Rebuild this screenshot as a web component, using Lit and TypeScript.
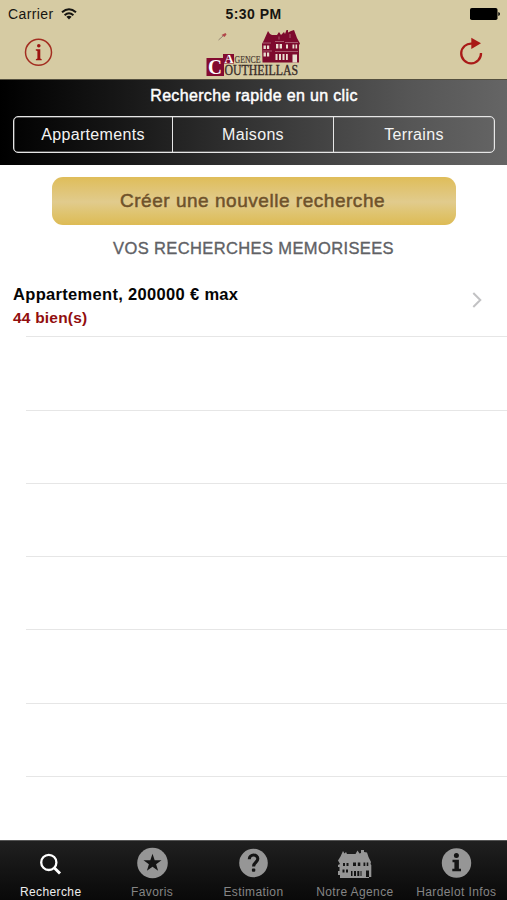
import { LitElement, html, css, svg } from "lit";
import { customElement } from "lit/decorators.js";
import { classMap } from "lit/directives/class-map.js";

const tabHouse = svg`
  <path fill="#969696" fill-rule="evenodd" d="M0 12.5 L2.5 8.5 L5 3 L6.5 5.5 L8 4 L9 6 H17.5 L19.5 2.5 L21.5 5.5 L23 5 V2 H26 V4 L29 4.5 L30.5 9 L33 14 L32.5 16 L33.3 17 V29 H31 V30 H2 V27 H0 V23 H1.5 V19 H0 V17 L2 16Z
  M5 15h2v3h-2z M8.5 15h2v3h-2z M15 14.5h3v3.5h-3z M19.8 14.5h2.5v3.5h-2.5z M25.5 14.5h1.8v3.5h-1.8z M28.7 14.5h1.6v3.5h-1.6z
  M4.5 21.5h2v3h-2z M8 21.5h2v3h-2z M13 23h1.5v5h-1.5z M16 23h2v5h-2z M19.3 23h2v5h-2z M22.5 23h1v5h-1z M28 22.5h3v6.5h-3z"/>`;

const logoHouse = svg`
  <path fill="#7d0a2d" d="M56 16 L58 12 L60 7.5 L62 3 L64 6 L66 7 H71 L73 4 L75 7 L76 6 L78 4 L79 6 L80.5 2 H82 V4.5 L85 3 L88 2 L89.5 6 L91 10 L94 15.5 L93 17 V34.5 H56.5Z"/>
  <path fill="#e9ddd0" d="M57.5 17.5h2.4v3.5h-2.4z M61 17.5h2.2v3.5h-2.2z M70 16h2.4v4.5h-2.4z M73.6 16h2.4v4.5h-2.4z M80 16.5h2v4h-2z M86.5 16.5h1.8v4h-1.8z M89.5 16.5h1.6v4h-1.6z
    M57.5 24.5h2.4v4h-2.4z M61 24.5h2.2v4h-2.2z M69.5 26h2v6h-2z M73 26h2v6h-2z M76.5 26h2v6h-2z M80 26h1.8v6h-1.8z M86.5 26.5h4.5v8h-4.5z"/>
  <path fill="none" stroke="#c9929a" stroke-width=".6" d="M57 15H65M69 13.5H78M79 14.5H92M57 23H66M69 23.5H92M73 8.5V11.5M84 6V10"/>`;

const icons = {
  search: svg`<circle cx="14.8" cy="14.4" r="7.6" fill="none" stroke="#fff" stroke-width="2.3"/><path d="M20.2 19.8L26 25.5" stroke="#fff" stroke-width="3"/>`,
  star: svg`<circle cx="16.5" cy="15" r="15.3" fill="#969696"/><path d="M16.5 5.7L18.7 12.2H25.5L20.1 16.2L22.1 22.7L16.5 18.8L10.9 22.7L12.9 16.2L7.5 12.2H14.3Z" fill="#151515"/>`,
  help: svg`<circle cx="16.5" cy="15" r="14.3" fill="#969696"/><path d="M12.3 11.2C12.3 5.7 20.8 5.8 20.8 10.8C20.8 14.4 16.6 14.2 16.6 18.6" fill="none" stroke="#151515" stroke-width="3.1"/><rect x="14.9" y="20.4" width="3.4" height="3.4" rx="1" fill="#151515"/>`,
  house: tabHouse,
  info: svg`<circle cx="16.5" cy="15" r="14.7" fill="#969696"/><circle cx="16.4" cy="7.6" r="2.5" fill="#151515"/><path d="M12.5 11.7H18.9V20.7H21V23.3H12.3V20.7H14.4V14.2H12.5Z" fill="#151515"/>`,
};

const tabs = [
  { label: "Recherche", icon: icons.search },
  { label: "Favoris", icon: icons.star },
  { label: "Estimation", icon: icons.help },
  { label: "Notre Agence", icon: icons.house },
  { label: "Hardelot Infos", icon: icons.info },
];

@customElement("app-root")
export class AppRoot extends LitElement {
  static styles = css`
    :host { display: flex; flex-direction: column; width: 507px; height: 900px; overflow: hidden;
      background: #fff; font-family: "Liberation Sans", Arial, sans-serif; }
    * { box-sizing: border-box; }
    svg { display: block; overflow: visible; }
    .header { height: 79px; flex: none; background: #d6cba3; }
    .status { height: 28px; display: grid; grid-template-columns: 1fr auto 1fr; align-items: center; color: #161511; }
    .carrier { display: flex; align-items: center; gap: 7px; padding-left: 8px; font-size: 14px; letter-spacing: .4px; }
    .time { font-size: 14px; font-weight: bold; letter-spacing: .45px; }
    .battery { justify-self: end; margin-right: 7px; }
    .nav { height: 51px; display: flex; justify-content: space-between; }
    .info { margin: 10px 0 0 24px; }
    .reload { margin: 8px 22px 0 0; }
    .quick { height: 86px; flex: none; padding: 6px 12px 0 13px; color: #fff;
      background: linear-gradient(90deg, #000 0%, #181818 25%, #3b3b3b 56%, #555 80%, #656565 100%);
      border-top: 1px solid #55503f; }
    .quick-title { margin: 0; height: 20px; line-height: 20px; text-align: center; font-size: 16px; font-weight: normal;
      letter-spacing: .34px; -webkit-text-stroke: .45px #fff; }
    .segments { margin-top: 10px; height: 37px; display: grid; grid-template-columns: 158px 161px 1fr;
      border: 1px solid #e6e6e6; border-radius: 5px; box-shadow: inset 0 0 0 .5px #999; }
    .segment { display: flex; align-items: center; justify-content: center; font-size: 16px; letter-spacing: .33px; color: #f4f4f4; }
    .segment + .segment { border-left: 1px solid #e6e6e6; }
    .create { flex: none; width: 404px; height: 48px; margin: 12px 0 0 52px; border: 0; border-radius: 11px; padding: 0 3px 0 0;
      font: 19px "Liberation Sans", Arial, sans-serif; letter-spacing: .53px; color: #6f522a; -webkit-text-stroke: .5px #6f522a;
      background: linear-gradient(#dfbd59 0%, #e0c473 25%, #e1cb8d 52%, #dfc470 75%, #ddbb55 100%); }
    .saved { margin: 13px 0 0; height: 20px; flex: none; line-height: 20px; text-align: center; font-size: 16.5px; font-weight: normal;
      color: #606165; letter-spacing: .38px; -webkit-text-stroke: .35px #606165; }
    .list { margin-top: 6px; flex: 1; min-height: 0; }
    .row { height: 73.3px; display: flex; justify-content: space-between; align-items: flex-start; padding: 19px 24px 0 13px;
      background: linear-gradient(#e6e6e6, #e6e6e6) 26px 100% / 100% 1px no-repeat; }
    .name { font-size: 16.5px; line-height: 22px; font-weight: bold; letter-spacing: .32px; color: #050505; }
    .count { margin-top: 2px; font-size: 15.5px; line-height: 22px; font-weight: bold; letter-spacing: .2px; color: #920e0e; }
    .chevron { margin-top: 8px; }
    .tabs { height: 60px; flex: none; display: grid; grid-template-columns: repeat(5, 1fr);
      background: linear-gradient(#202020, #151515 45%, #090909); border-top: 1px solid #555; }
    .tab { display: flex; flex-direction: column; align-items: center; padding-top: 7px; color: #858585;
      font-size: 12px; line-height: 14px; letter-spacing: .4px; white-space: nowrap; }
    .tab svg { margin-bottom: 5px; }
    .active { color: #ededed; }
  `;

  render() {
    return html`
      <div class="header">
        <div class="status">
          <div class="carrier"><span>Carrier</span>
            <svg width="16" height="12" viewBox="0 0 16 12" fill="none" stroke="#161511" stroke-width="2"><path d="M1 4.3Q8 -1.8 15 4.3"/><path d="M3.6 7.2Q8 3.3 12.4 7.2"/><path d="M5.4 8.8Q8 6.8 10.6 8.8L8 11.6Z" fill="#161511" stroke="none"/></svg>
          </div>
          <div class="time">5:30 PM</div>
          <svg class="battery" width="30" height="12" viewBox="0 0 30 12"><rect width="27.5" height="12" rx="1.8" fill="#000"/><path d="M28.3 4Q30 4.5 30 6T28.3 8Z" fill="#000"/></svg>
        </div>
        <div class="nav">
          <svg class="info" width="29" height="29" viewBox="0 0 29 29"><circle cx="14.5" cy="14.3" r="13" fill="none" stroke="#a32e21" stroke-width="1.5"/><circle cx="14.8" cy="7.7" r="1.8" fill="#9d1512"/><path d="M11.8 11.3H16.3V20.6L17.7 21.2V22.2H11.9V21.2L13.4 20.6V12.9L11.8 12.4Z" fill="#9d1512"/></svg>
          <svg class="logo" width="100" height="51" viewBox="0 0 100 51">
            <path d="M15.5 7L19.5 5L20.5 6.5L18.5 9Z" fill="#b1464a"/><path d="M12.5 12L17 8" stroke="#806d65" stroke-width=".8"/>
            ${logoHouse}
            <path d="M0.5 30H17V26H28V35.5H18V48H0.5Z" fill="#830b30"/>
            <g font-family="Liberation Serif, serif">
              <text x="2" y="46" font-size="20" font-weight="bold" fill="#fff" textLength="14" lengthAdjust="spacingAndGlyphs">C</text>
              <text x="18.5" y="35" font-size="11.5" font-weight="bold" fill="#fff" textLength="9" lengthAdjust="spacingAndGlyphs">A</text>
              <text x="28.5" y="34.7" font-size="10" fill="#4b3b34" stroke="#4b3b34" stroke-width=".2" textLength="26" lengthAdjust="spacingAndGlyphs">GENCE</text>
              <text x="18.5" y="46.6" font-size="14" fill="#382b28" stroke="#382b28" stroke-width=".35" textLength="73.5" lengthAdjust="spacingAndGlyphs">OUTHEILLAS</text>
            </g>
          </svg>
          <svg class="reload" width="26" height="30" viewBox="0 0 26 30"><path d="M13 7.6A9.9 9.9 0 1 0 22 17" fill="none" stroke="#a91917" stroke-width="2.3"/><path d="M12.3 1.8L22 7.2L12.3 13Z" fill="#a91917"/></svg>
        </div>
      </div>
      <div class="quick">
        <h1 class="quick-title">Recherche rapide en un clic</h1>
        <div class="segments">${["Appartements", "Maisons", "Terrains"].map((s) => html`<div class="segment">${s}</div>`)}</div>
      </div>
      <button class="create">Créer une nouvelle recherche</button>
      <h2 class="saved">VOS RECHERCHES MEMORISEES</h2>
      <div class="list">
        <div class="row">
          <div><div class="name">Appartement, 200000 € max</div><div class="count">44 bien(s)</div></div>
          <svg class="chevron" width="12" height="18" viewBox="0 0 12 18"><path d="M2.3 2L9.3 9L2.3 16" fill="none" stroke="#c2c2c4" stroke-width="2"/></svg>
        </div>
        ${Array.from({ length: 6 }, () => html`<div class="row"></div>`)}
      </div>
      <div class="tabs">
        ${tabs.map((t, i) => html`<div class=${classMap({ tab: true, active: i === 0 })}>
          <svg width="33" height="32" viewBox="0 0 33 32">${t.icon}</svg><span>${t.label}</span></div>`)}
      </div>`;
  }
}
